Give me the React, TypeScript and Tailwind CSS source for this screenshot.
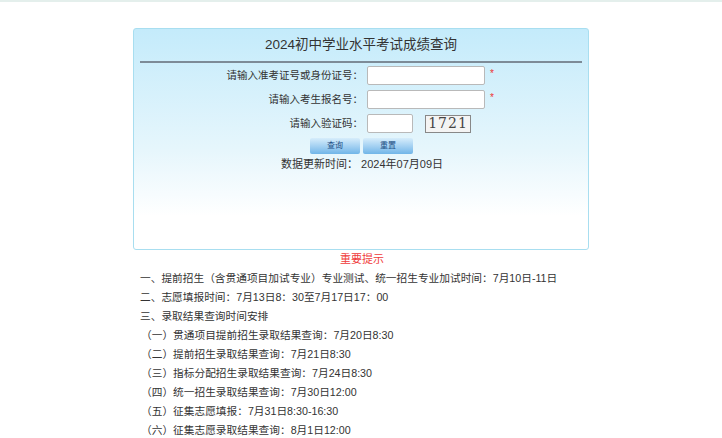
import React from "react";

const font = { fontFamily: '"Liberation Sans", "Noto Sans CJK SC", sans-serif' };

export default function App() {
  const items = [
    "一、提前招生（含贯通项目加试专业）专业测试、统一招生专业加试时间：7月10日-11日",
    "二、志愿填报时间：7月13日8：30至7月17日17：00",
    "三、录取结果查询时间安排",
    "（一）贯通项目提前招生录取结果查询：7月20日8:30",
    "（二）提前招生录取结果查询：7月21日8:30",
    "（三）指标分配招生录取结果查询：7月24日8:30",
    "（四）统一招生录取结果查询：7月30日12:00",
    "（五）征集志愿填报：7月31日8:30-16:30",
    "（六）征集志愿录取结果查询：8月1日12:00",
  ];
  return (
    <div className="w-[722px] h-[438px] bg-white overflow-hidden text-[#333]" style={font}>
      <div className="h-[2px] bg-[#e4efec]" />
      <div className="w-[456px] mx-auto mt-[26px]">
        <div className="h-[222px] border border-[#a8def0] rounded-[3px] bg-gradient-to-b from-[#c4ebfb] via-[#e6f6fc] via-55% to-white to-85% flex flex-col">
          <div className="h-[32px] flex items-center justify-center text-[13.5px] text-[#333] pt-[1px]">
            2024初中学业水平考试成绩查询
          </div>
          <div className="mx-[6px] h-[2px] bg-[#7d8b97]" />
          <div className="flex flex-col gap-[5px] mt-[3px]">
            <div className="flex items-center h-[19px]">
              <div className="w-[229px] text-right text-[10.5px]">请输入准考证号或身份证号：</div>
              <div className="ml-[4px] w-[118px] h-[19px] bg-white border border-[#b9b9b9] rounded-[2px]" />
              <div className="ml-[5px] text-[#e33] text-[10px] -mt-[4px]">*</div>
            </div>
            <div className="flex items-center h-[19px]">
              <div className="w-[229px] text-right text-[10.5px]">请输入考生报名号：</div>
              <div className="ml-[4px] w-[118px] h-[19px] bg-white border border-[#b9b9b9] rounded-[2px]" />
              <div className="ml-[5px] text-[#e33] text-[10px] -mt-[4px]">*</div>
            </div>
            <div className="flex items-center h-[19px]">
              <div className="w-[229px] text-right text-[10.5px]">请输入验证码：</div>
              <div className="ml-[4px] w-[46px] h-[19px] bg-white border border-[#b9b9b9] rounded-[2px]" />
              <div className="ml-[12px] w-[46px] h-[18px] bg-[#f4f4f4] border border-[#888] flex items-center justify-center">
                <span className="text-[14px] tracking-[1px] text-[#444]" style={{ fontFamily: '"DejaVu Serif", serif' }}>1721</span>
              </div>
            </div>
          </div>
          <div className="flex gap-[3px] ml-[176px] mt-[5px]">
            <div className="w-[50px] h-[16px] rounded-[2px] bg-gradient-to-b from-[#d7edfb] to-[#70b5e8] flex items-center justify-center text-[8px] text-[#1d4f86]">查询</div>
            <div className="w-[50px] h-[16px] rounded-[2px] bg-gradient-to-b from-[#d7edfb] to-[#70b5e8] flex items-center justify-center text-[8px] text-[#1d4f86]">重置</div>
          </div>
          <div className="text-center text-[11px] mt-[2px] leading-[16px] ml-[2px]">数据更新时间：&nbsp;2024年07月09日</div>
        </div>
        <div className="text-center text-[11px] text-[#f03a3a] mt-[1px] leading-[16px] ml-[2px]">重要提示</div>
        <div className="px-[7px] mt-[2px] text-[10.7px] leading-[19px] text-[#333]">
          {items.map((t, i) => (
            <div key={i} className={i >= 3 ? "ml-[1px]" : ""}>{t}</div>
          ))}
        </div>
      </div>
    </div>
  );
}
